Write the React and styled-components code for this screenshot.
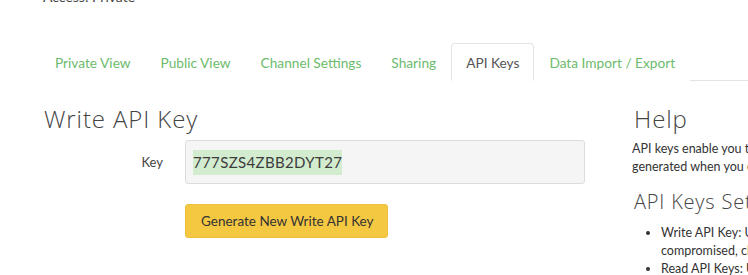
import React from 'react'
import styled, {createGlobalStyle} from 'styled-components'

const GlobalStyle = createGlobalStyle`
    body {
        margin: 0;
        background: #fff;
        font-family: Lato, "Open Sans", sans-serif;
        color: #444;
        overflow: hidden;
    }
`

const Page = styled.div`
    width: 1000px;
    padding-left: 40px;
`

const Access = styled.div`
    margin: -11px 0 0 3px;
    font-size: 14px;
    line-height: 16px;
    color: #444;
`

const TabBar = styled.ul`
    display: flex;
    list-style: none;
    margin: 38px 0 0 0;
    padding: 0;
    border-bottom: 1px solid #e3e3e3;
`

const Tab = styled.li`
    padding: 10px 14px 9px 14px;
    margin-bottom: -1px;
    font-size: 13.7px;
    line-height: 17px;
    color: ${props => props.active ? '#555' : '#6cbb6c'};
    background: #fff;
    border: 1px solid ${props => props.active ? '#e3e3e3' : 'transparent'};
    border-bottom-color: ${props => props.active ? '#fff' : 'transparent'};
    border-radius: 4px 4px 0 0;
`

const Content = styled.div`
    display: grid;
    grid-template-columns: 592px 1fr;
`

const Heading = styled.h2`
    margin: 23px 0 0 ${props => props.indent || 2}px;
    font-family: "Open Sans", Lato, sans-serif;
    font-weight: 300;
    font-size: 24px;
    letter-spacing: 0.9px;
    line-height: 30px;
    color: #444;
`

const SubHeading = styled(Heading)`
    margin-top: 14px;
    font-size: 20px;
    letter-spacing: 0.8px;
    line-height: 24px;
`

const FormRow = styled.div`
    display: grid;
    grid-template-columns: 145px 400px;
    align-items: center;
    margin-top: 6px;
`

const Label = styled.label`
    text-align: right;
    padding-right: 22px;
    font-size: 13px;
    color: #444;
`

const KeyField = styled.div`
    box-sizing: border-box;
    height: 44px;
    display: flex;
    align-items: center;
    padding-left: 7px;
    background: #f5f5f5;
    border: 1px solid #dcdcdc;
    border-radius: 3px;
`

const Selected = styled.span`
    background: #d3ebcf;
    font-size: 15px;
    letter-spacing: 0.35px;
    line-height: 25px;
    color: #3c3c3c;
`

const ButtonRow = styled.div`
    padding-left: 145px;
    margin-top: 20px;
`

const Button = styled.button`
    height: 34px;
    padding: 0 14px 0 15px;
    background: #f5c842;
    border: 1px solid #eec13c;
    border-radius: 3px;
    font-family: Lato, sans-serif;
    font-size: 13.5px;
    color: #333;
`

const Side = styled.div`
    font-size: 12.5px;
    line-height: 18px;
    color: #333;
`

const Para = styled.p`
    margin: 6px 0 0 0;
    white-space: nowrap;
`

const Bullets = styled.ul`
    margin: 10px 0 0 0;
    padding-left: 29px;
    line-height: 18px;
    white-space: nowrap;
`

export default function App() {
    const tabs = ['Private View', 'Public View', 'Channel Settings', 'Sharing', 'API Keys', 'Data Import / Export']
    return (
        <Page>
            <GlobalStyle />
            <Access>Access: Private</Access>
            <TabBar>
                {tabs.map(t => <Tab key={t} active={t === 'API Keys'}>{t}</Tab>)}
            </TabBar>
            <Content>
                <div>
                    <Heading indent={4}>Write API Key</Heading>
                    <FormRow>
                        <Label>Key</Label>
                        <KeyField><Selected>777SZS4ZBB2DYT27</Selected></KeyField>
                    </FormRow>
                    <ButtonRow>
                        <Button>Generate New Write API Key</Button>
                    </ButtonRow>
                </div>
                <Side>
                    <Heading>Help</Heading>
                    <Para>
                        API keys enable you to write data to a channel or read data from a private channel. API keys are auto-<br/>
                        generated when you create a new channel.
                    </Para>
                    <SubHeading>API Keys Settings</SubHeading>
                    <Bullets>
                        <li>Write API Key: Use this key to write data to a channel. If you feel your key has been<br/>
                            compromised, click Generate New Write API Key.</li>
                        <li>Read API Keys: Use this key to allow other people to view your private channel feeds and charts.</li>
                    </Bullets>
                </Side>
            </Content>
        </Page>
    )
}
